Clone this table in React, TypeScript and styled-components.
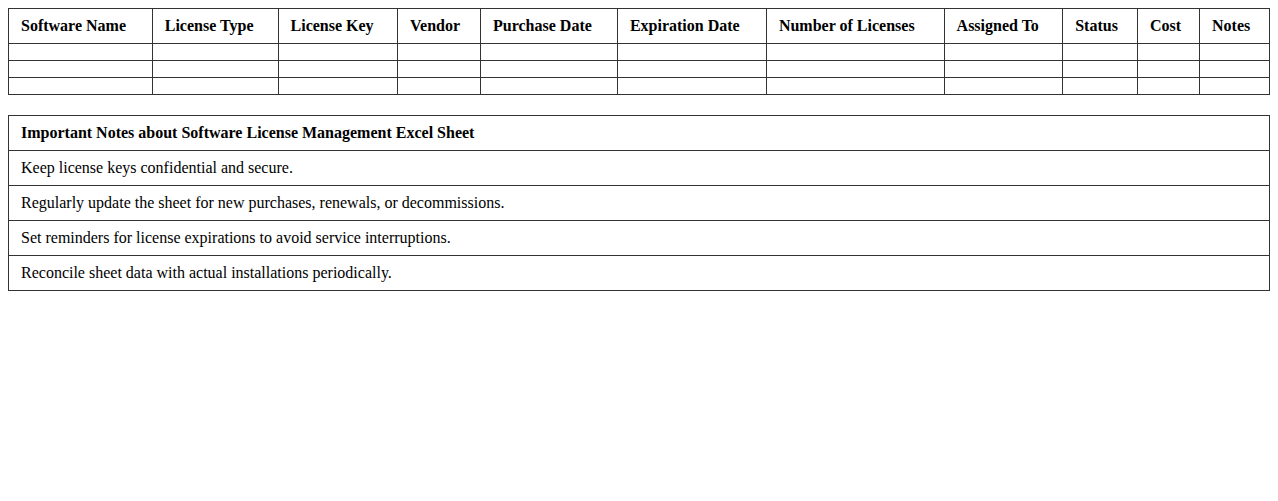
import styled, { createGlobalStyle } from "styled-components";

const GlobalStyle = createGlobalStyle`
  body {
    margin: 8px;
    font-family: "Liberation Serif", "Times New Roman", serif;
    font-size: 16px;
    color: #000;
    background: #fff;
  }
`;

const Table = styled.table<{ $gap?: number }>`
  width: 100%;
  border-collapse: collapse;
  margin-top: ${(p) => p.$gap ?? 0}px;
`;

const Th = styled.th`
  border: 1px solid #333;
  padding: 8px 12px;
  text-align: left;
  font-weight: bold;
`;

const Td = styled.td`
  border: 1px solid #333;
  padding: 8px 12px;
  text-align: left;
`;

const columns = [
  "Software Name",
  "License Type",
  "License Key",
  "Vendor",
  "Purchase Date",
  "Expiration Date",
  "Number of Licenses",
  "Assigned To",
  "Status",
  "Cost",
  "Notes",
];

const notes = [
  "Keep license keys confidential and secure.",
  "Regularly update the sheet for new purchases, renewals, or decommissions.",
  "Set reminders for license expirations to avoid service interruptions.",
  "Reconcile sheet data with actual installations periodically.",
];

function App() {
  return (
    <>
      <GlobalStyle />
      <Table>
        <thead>
          <tr>
            {columns.map((c) => (
              <Th key={c}>{c}</Th>
            ))}
          </tr>
        </thead>
        <tbody>
          {[0, 1, 2].map((r) => (
            <tr key={r}>
              {columns.map((c) => (
                <Td key={c}></Td>
              ))}
            </tr>
          ))}
        </tbody>
      </Table>
      <Table $gap={20}>
        <thead>
          <tr>
            <Th>Important Notes about Software License Management Excel Sheet</Th>
          </tr>
        </thead>
        <tbody>
          {notes.map((n) => (
            <tr key={n}>
              <Td>{n}</Td>
            </tr>
          ))}
        </tbody>
      </Table>
    </>
  );
}

export default App;
